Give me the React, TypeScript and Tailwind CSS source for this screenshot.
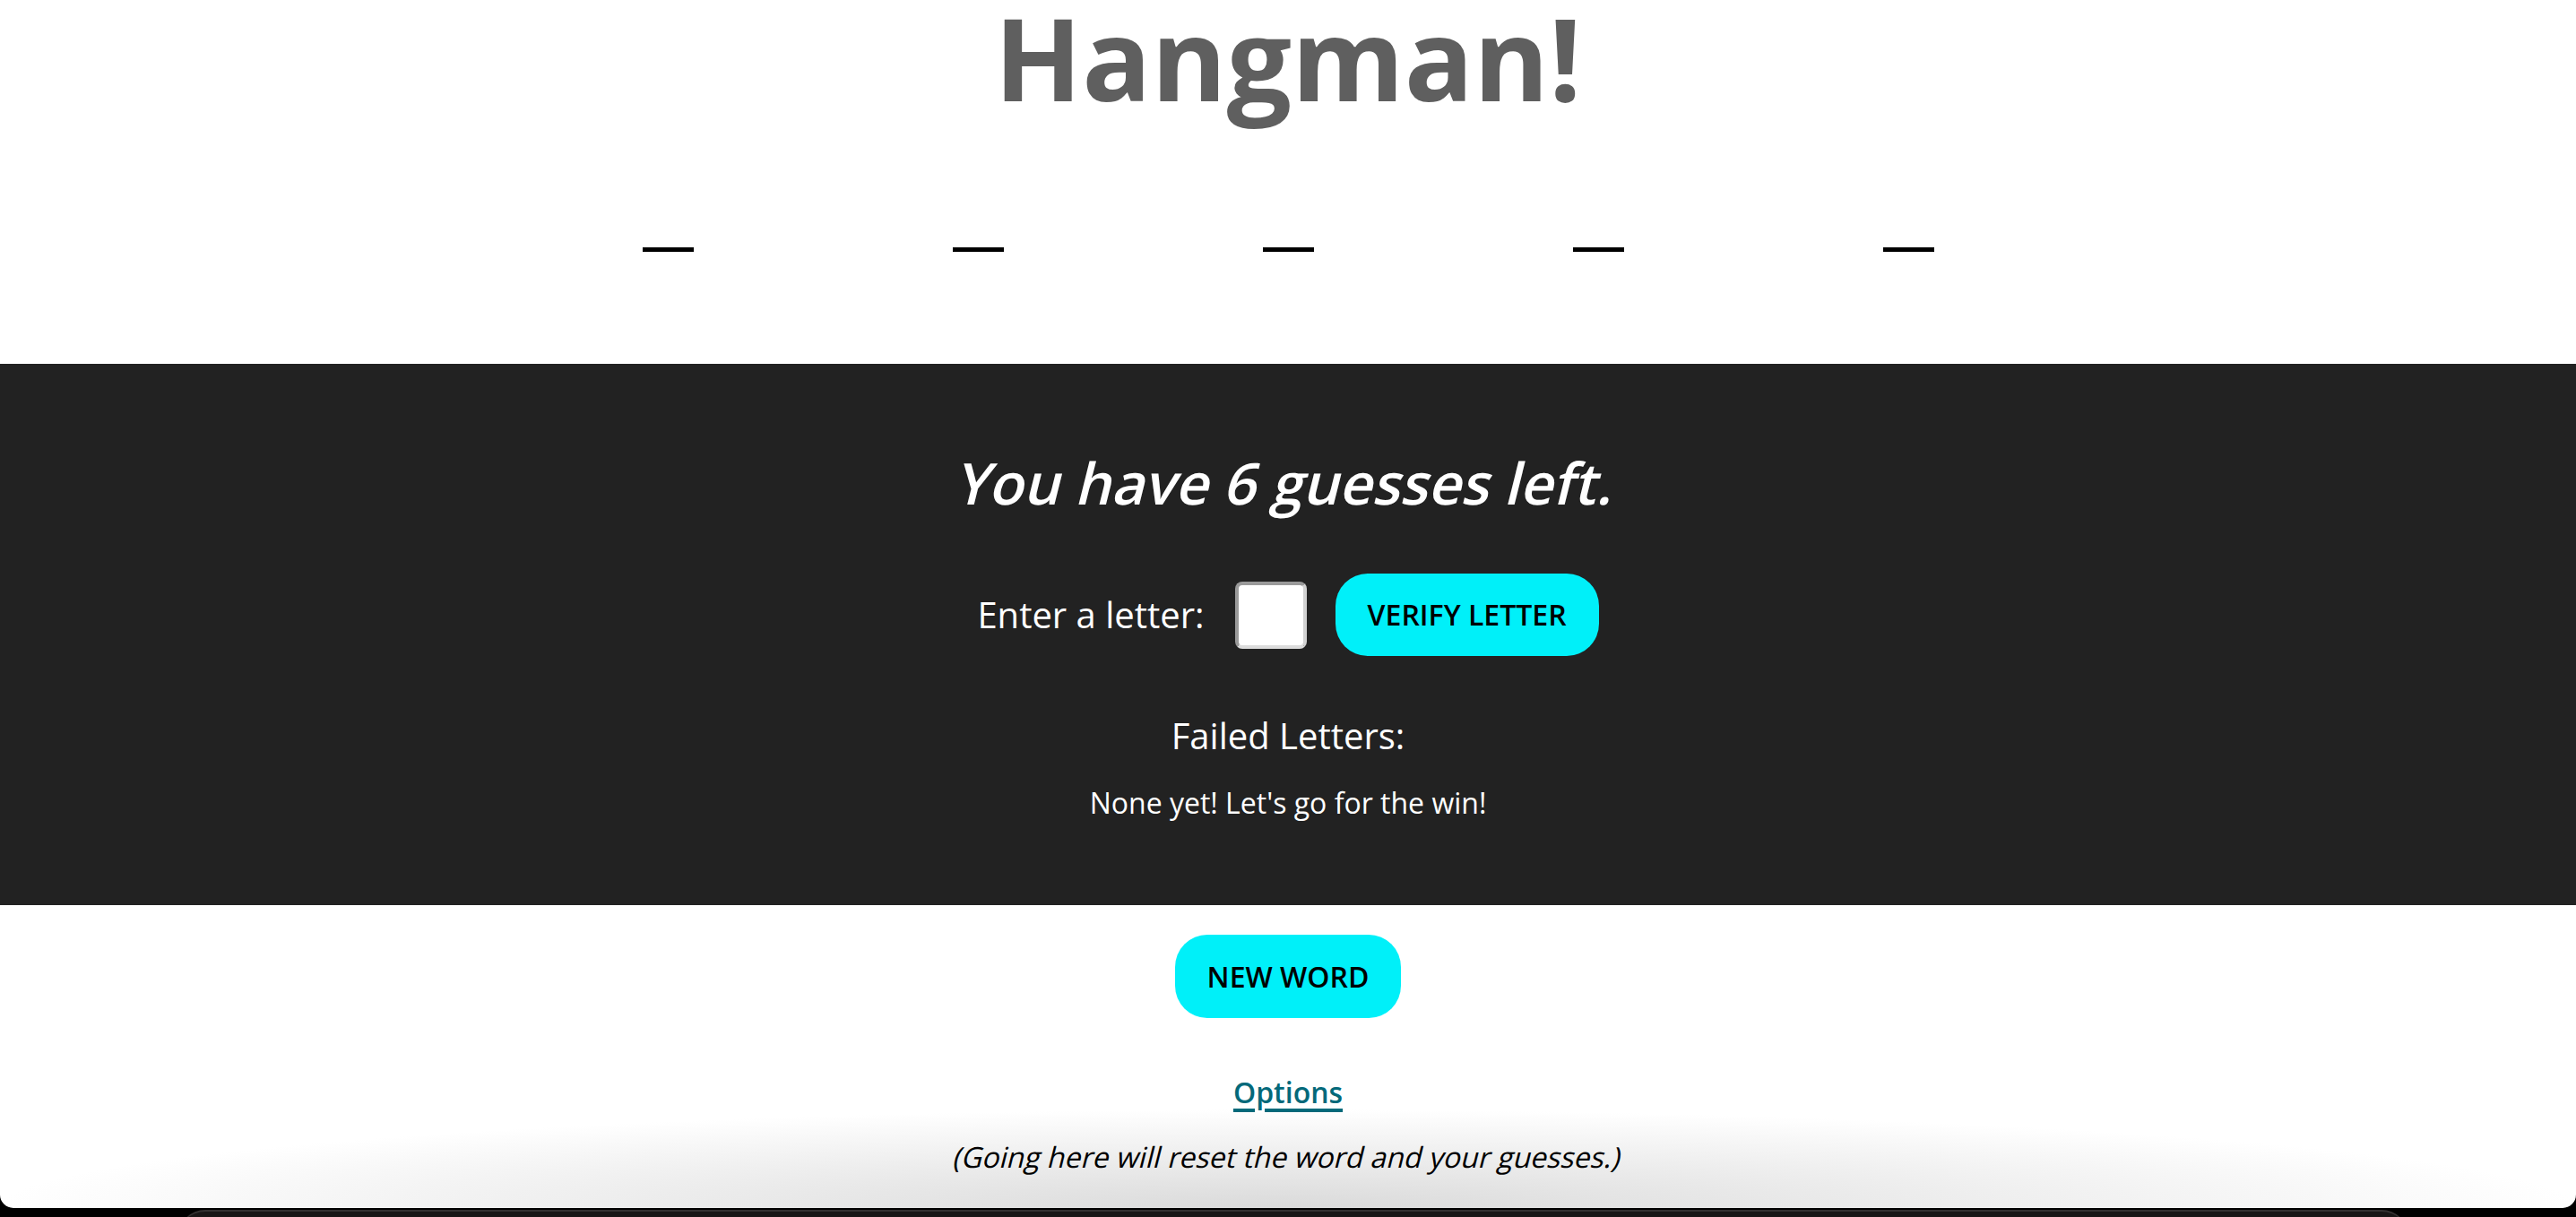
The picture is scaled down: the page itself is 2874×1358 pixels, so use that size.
import React from "react";

export default function App() {
  const slots = [0, 1, 2, 3, 4];
  return (
    <div className="h-[1358px] w-full overflow-hidden bg-black font-['Open_Sans',sans-serif]">
      <div className="flex h-[1348px] w-full flex-col items-center rounded-b-[15px] bg-white bg-[radial-gradient(1440px_110px_at_50%_100%,#dadada,#ffffff00)]">
        <h1 className="text-[128px] font-bold leading-none text-[#5f5f5f]">Hangman!</h1>

        <div className="mt-[148px] flex gap-[289px]">
          {slots.map((i) => (
            <span key={i} className="block h-[5px] w-[57px] bg-black" />
          ))}
        </div>

        <section className="mt-[125px] flex h-[604px] w-full flex-col items-center bg-[#222222] pt-[89px] text-white">
          <h2 className="skew-x-[-14deg] text-[64px] font-semibold leading-[88px]">You have 6 guesses left.</h2>

          <div className="mt-[57px] flex h-[92px] items-center">
            <label className="text-[40px] leading-[56px]">Enter a letter:</label>
            <input
              type="text"
              maxLength={1}
              className="ml-[34px] h-[75px] w-[80px] rounded-[8px] border-4 border-t-[#9a9a9a] border-l-[#9a9a9a] border-r-[#d2d2d2] border-b-[#dcdcdc] bg-white outline-none"
            />
            <button className="ml-[32px] flex h-[92px] items-center rounded-[36px] bg-[#00f0f9] px-[36px] text-[32px] font-semibold leading-none text-black">
              VERIFY LETTER
            </button>
          </div>

          <p className="mt-[62px] text-[40px] leading-[54px]">Failed Letters:</p>
          <p className="mt-[26px] text-[32px] leading-[44px]">None yet! Let's go for the win!</p>
        </section>

        <button className="mt-[33px] flex h-[93px] items-center rounded-[36px] bg-[#00f0f9] px-[36px] text-[32px] font-semibold leading-none text-black">
          NEW WORD
        </button>

        <a
          href="#"
          className="mt-[61px] text-[32px] font-semibold leading-[44px] text-[#03697a] underline decoration-[4px] underline-offset-[6px]"
        >
          Options
        </a>
        <p className="mt-[28px] skew-x-[-14deg] text-[32px] leading-[44px] text-black">
          (Going here will reset the word and your guesses.)
        </p>
      </div>
      <div className="ml-[199px] mr-[187px] mt-[2px] h-[30px] rounded-t-[30px] border-t-2 border-[#333131] bg-[#181616]" />
    </div>
  );
}
